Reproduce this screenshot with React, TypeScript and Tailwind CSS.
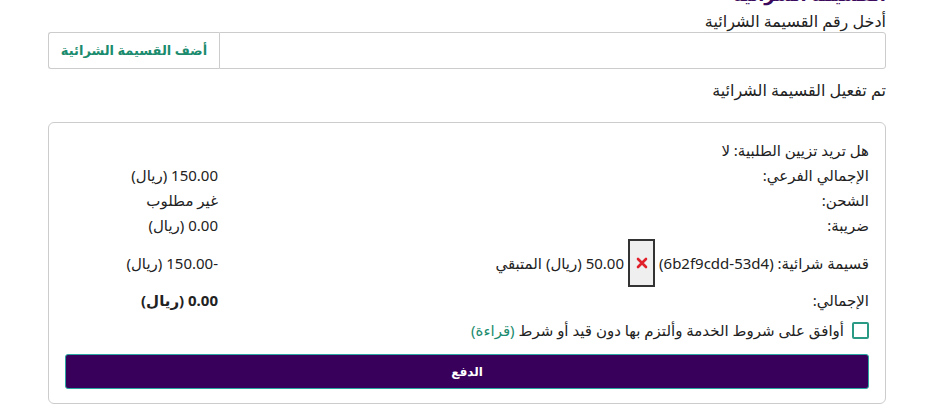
export default function App() {
  const font = { fontFamily: '"Noto Sans", "DejaVu Sans", sans-serif' }
  return (
    <div dir="rtl" style={font} className="w-[935px] h-[406px] overflow-hidden bg-white text-[#222] text-[15px]">
      <div className="pr-[49px] pl-[48px]">
        <h3 className="-mt-[18px] text-[18px] leading-[24px] font-bold text-[#3b0a5c]">القسيمة الشرائية</h3>
        <label className="block mt-[3px] leading-[24px] text-[16px]">أدخل رقم القسيمة الشرائية</label>
        <div className="flex -mt-[1px] h-[37px]">
          <input className="flex-1 border border-[#ccc] rounded-r-[3px] outline-none px-3" />
          <button className="w-[171px] border border-[#ccc] border-r-0 rounded-l-[3px] bg-white text-[13px] font-bold text-[#1b8c6e]">
            أضف القسيمة الشرائية
          </button>
        </div>
        <p className="mt-[9px] leading-[24px] text-[16px]">تم تفعيل القسيمة الشرائية</p>

        <div className="mt-[20px] border border-[#ccc] rounded-[6px] px-[16px] pt-[15px] pb-[14px]">
          <div className="grid grid-cols-[1fr_153px] leading-[25px]">
            <div>هل تريد تزيين الطلبية: لا</div>
            <div></div>
            <div>الإجمالي الفرعي:</div>
            <div>150.00 (ريال)</div>
            <div>الشحن:</div>
            <div>غير مطلوب</div>
            <div>ضريبة:</div>
            <div>0.00 (ريال)</div>
            <div className="h-[50px] flex items-center gap-[4px]">
              <span>قسيمة شرائية: (6b2f9cdd-53d4)</span>
              <button className="w-[27px] h-[48px] bg-[#efefef] border-2 border-[#333] flex items-center justify-center">
                <svg width="12" height="12" viewBox="0 0 12 12">
                  <path d="M2 2 L10 10 M10 2 L2 10" stroke="#e0202a" strokeWidth="2.6" strokeLinecap="round" />
                </svg>
              </button>
              <span>50.00 (ريال) المتبقي</span>
            </div>
            <div className="h-[50px] flex items-center">-150.00 (ريال)</div>
            <div>الإجمالي:</div>
            <div className="font-bold">0.00 (ريال)</div>
          </div>
          <label className="mt-[4px] h-[26px] flex items-center gap-[8px]">
            <span className="w-[17px] h-[17px] border-2 border-[#2a9a84] rounded-[2px] bg-white"></span>
            <span>
              أوافق على شروط الخدمة وألتزم بها دون قيد أو شرط <span className="text-[#1b8c6e]">(قراءة)</span>
            </span>
          </label>
          <button className="mt-[11px] w-full h-[35px] bg-[#38005b] border border-[#2aa7a0] rounded-[3px] text-white text-[12px] font-bold">
            الدفع
          </button>
        </div>
      </div>
    </div>
  )
}
